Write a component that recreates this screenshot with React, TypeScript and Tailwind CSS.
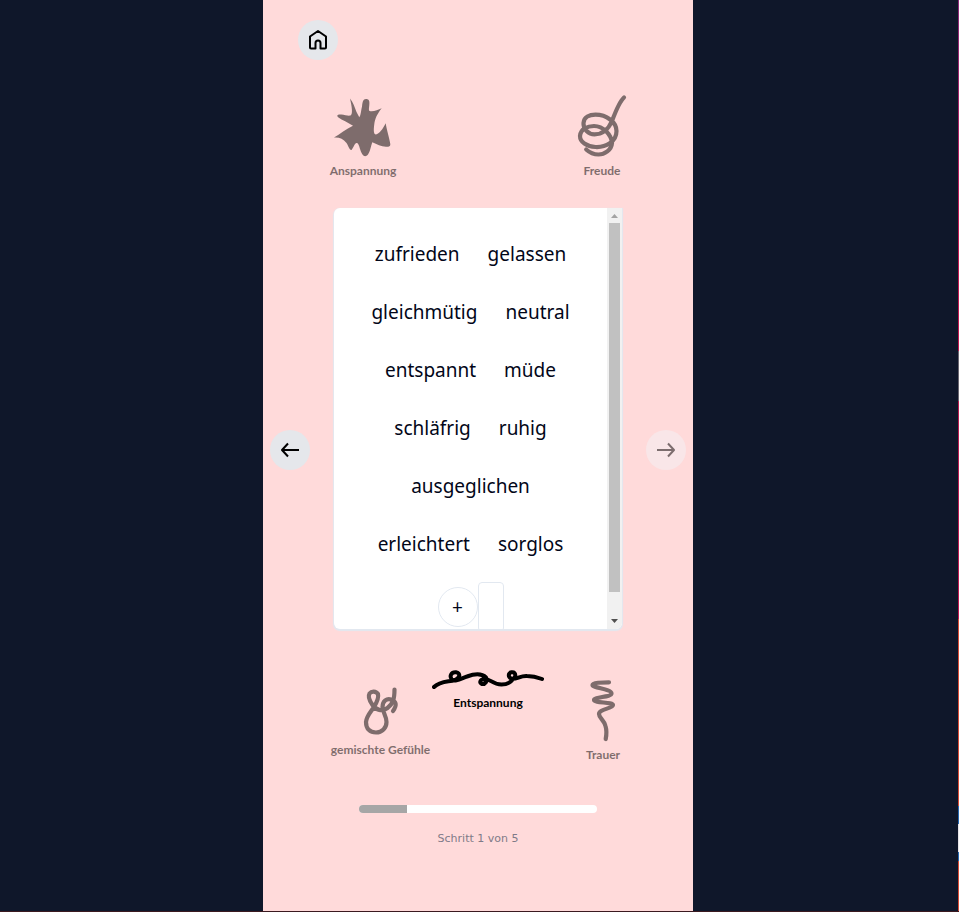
import type { ReactNode } from "react";

const wordRows = [
  ["zufrieden", "gelassen"],
  ["gleichmütig", "neutral"],
  ["entspannt", "müde"],
  ["schläfrig", "ruhig"],
  ["ausgeglichen"],
  ["erleichtert", "sorglos"],
];

function Feeling({ label, active = false, className = "", children }: { label: string; active?: boolean; className?: string; children: ReactNode }) {
  return (
    <button
      type="button"
      aria-pressed={active}
      className={`flex flex-col items-center gap-1 whitespace-nowrap font-[Lato,sans-serif] text-[12px] leading-[18px] font-bold text-black ${active ? "" : "opacity-50"} ${className}`}
    >
      {children}
      <span>{label}</span>
    </button>
  );
}

function HomeIcon() {
  return (
    <svg width="24" height="24" viewBox="0 0 24 24" fill="none" stroke="currentColor" strokeWidth="2" strokeLinejoin="round">
      <path d="M4 8.500 12 3 20 8.500V19.500Q20 20.500 19 20.500H14.500V15A2.500 2.500 0 0 0 9.500 15V20.500H5Q4 20.500 4 19.500Z" />
    </svg>
  );
}

function ArrowIcon({ path }: { path: string }) {
  return (
    <svg width="24" height="24" viewBox="0 0 24 24" fill="none" stroke="currentColor" strokeWidth="2" strokeLinejoin="round">
      <path d={path} />
    </svg>
  );
}

export default function App() {
  return (
    <div className="flex min-h-screen border-b border-[#3b1a20] bg-[#0f172a]">
      <div className="flex flex-1 justify-center">
        <main className="flex w-[430px] max-w-full flex-col bg-[#ffdada] pt-5">
          <header className="px-[35px]">
            <button type="button" aria-label="Startseite" className="flex size-10 items-center justify-center rounded-full bg-gray-200 text-black">
              <HomeIcon />
            </button>
          </header>

          <div className="mt-[34px] flex justify-between px-[66px]">
            <Feeling label="Anspannung">
              <svg width="68" height="64" viewBox="0 0 68 64" fill="currentColor">
                <path d="M21 4.500C24 8 26 14 27.500 18L30.300 23.300C32 21 32 16 33 12.700C33.500 8 34 5 37 5C40 5 40.800 7 40.300 11C40 14 39.500 16.500 40.500 17C44 18 49 16 52.700 14.300C48 20 46 25 45.300 30C44.500 36 44.500 40.500 47 40.500C50 40 54 35 56.700 29.300C57.500 35 61 47 61.300 50C61.500 53 59 52.700 57 52.700C52 52.500 48 50.500 43.300 48.300C42 52 41 58 39 60.500C37 63 35 62.500 33.500 60.500C31 57 30.500 51 28.500 49.300C26 47.500 25 53 22.500 56C20.500 56.500 19.500 52 17.500 49C14 44.500 10 43 5 43.500C11 40 17 35 24 31.700C19 28.500 13 26 9.500 23.500C7 21 9 20 12.300 20.500C16 21 19 22 21.500 21.500C24 20.500 23 13 21 4.500Z" />
              </svg>
            </Feeling>
            <Feeling label="Freude">
              <svg width="50" height="64" viewBox="0 0 50 64" fill="none" stroke="currentColor" strokeWidth="4.200" strokeLinecap="round">
                <path d="M47 3.500C42.500 7.500 39.500 15 35 27C31.500 35 25.500 40.300 17.500 40.300C11.500 40.300 6 35 6.500 29C7 23 12.500 20.700 18.500 20.700C29.500 20.700 39.500 28 39.500 37C39.500 48 28.500 53.500 18.500 53C9.500 52.500 3 48 3 42C3.500 35 10.500 32 17 32C26.500 32 34.500 41 35 49C34.500 56 27.500 60.500 21.500 60.500C16.500 60.500 12.500 58.500 9.200 55.500" />
              </svg>
            </Feeling>
          </div>

          <div className="mt-7 flex items-center justify-between gap-6 px-[7px]">
            <button type="button" aria-label="Zurück" className="mt-[62px] flex size-10 shrink-0 items-center justify-center rounded-full bg-gray-200 text-black">
              <ArrowIcon path="M21 12H5M10 5.500 4 12 10 18.500" />
            </button>

            <section className="flex h-[421px] min-w-0 flex-1 overflow-hidden rounded-l-md rounded-br-md bg-white shadow-[0_1px_1px_1px_#e2e8f0]">
              <div className="flex min-w-0 flex-1 flex-col overflow-hidden pt-[17px] font-[Noto_Sans,sans-serif] text-[19px] text-slate-950">
                {wordRows.map((row) => (
                  <div key={row[0]} className="flex h-[58px] shrink-0 items-center justify-center">
                    {row.map((word) => (
                      <button key={word} type="button" className="px-3.5">
                        {word}
                      </button>
                    ))}
                  </div>
                ))}
                <div className="mt-[9px] flex shrink-0 items-start justify-center">
                  <button type="button" aria-label="Wort hinzufügen" className="mt-[5px] flex size-10 items-center justify-center rounded-full border border-slate-200 text-[19px]">
                    +
                  </button>
                  <input aria-label="Eigenes Wort" className="h-[50px] w-[26px] rounded border border-slate-200 bg-white" />
                </div>
              </div>
              <div aria-hidden="true" className="flex w-[15px] shrink-0 flex-col items-center bg-[#f1f1f1]">
                <svg width="15" height="15" viewBox="0 0 15 15" className="shrink-0">
                  <path d="M4 10h7L7.500 6Z" fill="#a3a3a3" />
                </svg>
                <div className="h-[369px] w-[11px] bg-[#c1c1c1]" />
                <svg width="15" height="15" viewBox="0 0 15 15" className="mt-auto shrink-0">
                  <path d="M4 5h7L7.500 9Z" fill="#505050" />
                </svg>
              </div>
            </section>

            <button type="button" aria-label="Weiter" disabled className="mt-[62px] flex size-10 shrink-0 items-center justify-center rounded-full bg-[#f9e6e8] text-[#7c6d6e]">
              <ArrowIcon path="M3 12H19M14 5.500 20 12 14 18.500" />
            </button>
          </div>

          <div className="mt-[39px] flex items-start pr-[70px] pl-[66px]">
            <Feeling label="gemischte Gefühle" className="w-[103px] pt-[19px]">
              <svg width="104" height="50" viewBox="0 0 104 50" fill="none" stroke="currentColor" strokeWidth="4.200" strokeLinecap="round">
                <path d="M65.500 2.500C65.500 12 64 17 58.500 21C53 25 47 23 43.500 18C40 13 39 9 40.500 6.500C42.500 4 47 4 49 7C50 11 48 15 45 20C41 26 37.500 29 37 35C37 42 41 45.500 47 45.500C53 45.500 57.500 41 57.500 35C57.500 29 53.500 25 53.500 20C53.500 14 58 11 62 12.500C67 14 68.500 18 64 24" />
              </svg>
            </Feeling>
            <Feeling label="Entspannung" active>
              <svg width="112" height="22" viewBox="0 0 112 22" fill="none" stroke="currentColor" strokeWidth="4" strokeLinecap="round">
                <path d="M2 19C8 13 16 14 23 12C28 10 29 5 24 4.300C19 4 17.500 8 19.500 11C23 15 30 10 35 8.500C42 6 49 4.500 54 9.500C56 13 53 16.500 50 16C47 15 48 11.500 52 11C58 10 60 16.500 69.500 16.500C78 16.500 80 12 83 9C84 5 82 4 79.500 4.300C76 5 76 9 79 10.500C84 12 88 7.500 95 8C102 8 106 9.500 110 11" />
              </svg>
            </Feeling>
            <Feeling label="Trauer" className="ml-auto pt-[10px]">
              <svg width="40" height="64" viewBox="0 0 40 64" fill="none" stroke="currentColor" strokeWidth="4.200" strokeLinecap="round" strokeLinejoin="round">
                <path d="M26 4.300C19 4.300 9.500 4.500 9.500 7C9.500 10 28.500 11 28.500 15.500C28.500 19 11 19 11 22C11 25 30 24 30 27C30 30.500 16 31 16 36C16 40 21 42 22.500 48C24 53 23.500 57 22.700 61" />
              </svg>
            </Feeling>
          </div>

          <div className="mt-[41px] flex flex-col items-center gap-[17px] px-24 pb-12">
            <div role="progressbar" aria-label="Fortschritt" aria-valuemin={0} aria-valuemax={5} aria-valuenow={1} className="h-2 w-full overflow-hidden rounded-full bg-white">
              <div className="h-full w-1/5 bg-[#a6a6a6]" />
            </div>
            <p className="font-[DejaVu_Sans,sans-serif] text-[11px] leading-[18px] text-[#7f7a88]">Schritt 1 von 5</p>
          </div>
        </main>
      </div>
      <div
        aria-hidden="true"
        className="w-[3px] border-l-2 border-[#0f172a] bg-[linear-gradient(#8b2a7a_0%,#c01850_24%,#c01850_38.500%,#6b6670_38.500%,#6b6670_44%,#b81c50_44%,#c01850_68%,#d84b35_68%,#d84b35_88.500%,#2868b0_88.500%,#2868b0_90.500%,#e8e4e8_90.500%,#e8e4e8_93.500%,#2868b0_93.500%,#2868b0_94.500%,#d84b35_94.500%)]"
      />
    </div>
  );
}
